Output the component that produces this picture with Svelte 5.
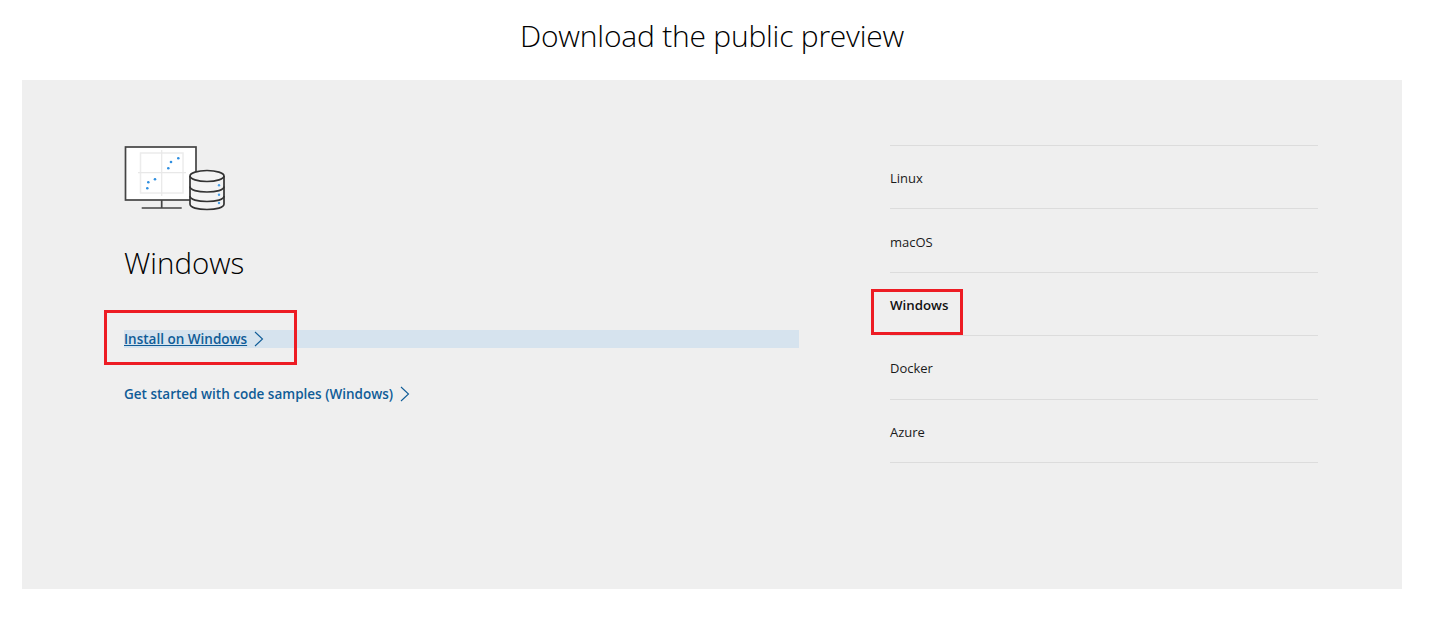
<script>
	const items = [
		{ name: 'Linux' },
		{ name: 'macOS' },
		{ name: 'Windows', active: true },
		{ name: 'Docker' },
		{ name: 'Azure' }
	];
</script>

<div class="page">
	<h1>Download the public preview</h1>
	<section class="panel">
		<div class="left">
			<svg class="logo" width="102" height="66" viewBox="0 0 102 66" fill="none">
				<rect x="1.500" y="2" width="70.500" height="53" stroke="#444" stroke-width="1.700" fill="#fff" />
				<rect x="16.500" y="8" width="42.500" height="40" stroke="#ececec" stroke-width="1.500" />
				<path d="M37.700 5v46M14 27.700h48" stroke="#e8e8e8" stroke-width="1.200" />
				<g fill="#2f8fe0">
					<circle cx="54.300" cy="13.300" r="1.300" />
					<circle cx="47" cy="17" r="1.300" />
					<circle cx="44.300" cy="23.300" r="1.300" />
					<circle cx="31" cy="34.300" r="1.300" />
					<circle cx="24.300" cy="37.300" r="1.300" />
					<circle cx="23.300" cy="43.300" r="1.300" />
				</g>
				<path d="M37.700 55v8M17.700 63h40" stroke="#444" stroke-width="1.700" />
				<path d="M66 31v28c0 3.500 7.600 5.500 17 5.500s17-2 17-5.500V31" stroke="#333" stroke-width="1.700" fill="#f3f3f3" />
				<ellipse cx="83" cy="31" rx="17" ry="5.500" stroke="#333" stroke-width="1.700" fill="#f3f3f3" />
				<path d="M66 41.500c0 3.500 7.600 5.500 17 5.500s17-2 17-5.500M66 51c0 3.500 7.600 5.500 17 5.500s17-2 17-5.500" stroke="#333" stroke-width="1.700" />
				<g fill="#4a9fe6">
					<circle cx="95" cy="40.300" r="1.200" />
					<circle cx="95" cy="49.700" r="1.200" />
					<circle cx="95" cy="58" r="1.200" />
				</g>
			</svg>
			<h2>Windows</h2>
			<div class="link-row selected">
				<a href="#install" class="underlined">Install on Windows</a>
				<svg class="chev" width="10" height="16" viewBox="0 0 10 16" fill="none"><path d="M1 1l7.500 7L1 15" stroke="currentColor" stroke-width="1.100" /></svg>
				<span class="mark mark-install"></span>
			</div>
			<div class="link-row">
				<a href="#samples">Get started with code samples (Windows)</a>
				<svg class="chev" width="10" height="16" viewBox="0 0 10 16" fill="none"><path d="M1 1l7.500 7L1 15" stroke="currentColor" stroke-width="1.100" /></svg>
			</div>
		</div>
		<ul class="right">
			{#each items as item}
				<li class:active={item.active}>
					<span>{item.name}</span>
					{#if item.active}<span class="mark mark-win"></span>{/if}
				</li>
			{/each}
		</ul>
	</section>
</div>

<style>
	:global(body) {
		background: #fff;
	}

	.page {
		width: 1432px;
		height: 625px;
		overflow: hidden;
		font-family: "Open Sans", "Noto Sans", sans-serif;
	}

	h1 {
		margin: 0;
		height: 80px;
		padding-right: 8px;
		box-sizing: border-box;
		line-height: 72px;
		font-size: 30px;
		letter-spacing: -0.22px;
		font-weight: 300;
		text-align: center;
		color: #000;
	}

	.panel {
		margin-left: 22px;
		width: 1380px;
		height: 509px;
		background: #efefef;
		display: flex;
		box-sizing: border-box;
		padding: 65px 84px 0 102px;
		justify-content: space-between;
	}

	.left {
		width: 675px;
	}

	.logo {
		display: block;
	}

	h2 {
		margin: 32px 0 0;
		font-size: 29.500px;
		line-height: 40px;
		font-weight: 300;
		color: #000;
	}

	.link-row {
		position: relative;
		display: flex;
		align-items: center;
		gap: 7px;
		height: 18px;
		color: #0f5c97;
		font-size: 13.500px;
		font-weight: 600;
	}

	.selected {
		margin-top: 47px;
		background: #d6e3ee;
		margin-bottom: 37px;
	}

	a {
		color: inherit;
		text-decoration: none;
	}

	.underlined {
		text-decoration: underline;
	}

	.right {
		list-style: none;
		margin: 0;
		padding: 0;
		width: 428px;
		border-top: 1px solid #dcdcdc;
	}

	li {
		position: relative;
		box-sizing: border-box;
		height: 63.400px;
		display: flex;
		align-items: center;
		padding-top: 2px;
		border-bottom: 1px solid #dcdcdc;
		font-size: 13px;
		color: #1a1a1a;
	}

	.active {
		font-size: 13.300px;
		font-weight: 600;
		color: #111;
		padding-top: 3px;
	}

	.mark {
		position: absolute;
		border: 3px solid #ed1c24;
		box-sizing: border-box;
	}

	.mark-install {
		left: -20px;
		top: -20px;
		width: 193px;
		height: 55px;
	}

	.mark-win {
		left: -19px;
		top: 16px;
		width: 92px;
		height: 46px;
	}
</style>
